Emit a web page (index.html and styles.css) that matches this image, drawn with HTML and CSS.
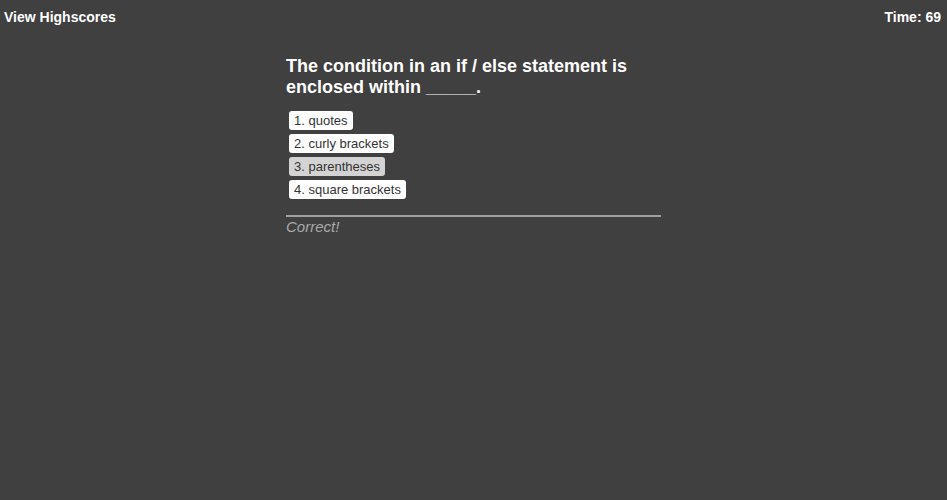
FILE: index.html
```html
<!DOCTYPE html>
<html>
<head>
<meta charset="utf-8">
<link rel="stylesheet" href="styles.css">
</head>
<body>
<header class="topbar">
  <a class="highscores">View Highscores</a>
  <span class="timer">Time: 69</span>
</header>
<main class="quiz">
  <h2 class="question">The condition in an if / else statement is enclosed within _____.</h2>
  <div class="choices">
    <button class="choice">1. quotes</button>
    <button class="choice">2. curly brackets</button>
    <button class="choice selected">3. parentheses</button>
    <button class="choice">4. square brackets</button>
  </div>
  <div class="feedback">Correct!</div>
</main>
</body>
</html>
```
FILE: styles.css
```css
html, body {
  margin: 0;
  padding: 0;
  background: #404040;
  font-family: "Liberation Sans", Arial, sans-serif;
  height: 100%;
}
.topbar {
  display: flex;
  justify-content: space-between;
  padding: 9px 6px 0 4px;
  font-size: 14px;
  font-weight: bold;
  color: #fff;
}
.quiz {
  width: 375px;
  margin: 0 auto;
  padding-top: 31px;
  box-sizing: border-box;
}
.question {
  margin: 0 0 13px 0;
  font-size: 18px;
  line-height: 21px;
  color: #fff;
}
.choices {
  display: flex;
  flex-direction: column;
  align-items: flex-start;
  gap: 4px;
  padding-left: 3px;
}
.choice {
  font-family: "Liberation Sans", Arial, sans-serif;
  font-size: 13px;
  line-height: 15px;
  color: #333;
  background: #fff;
  border: none;
  border-radius: 3px;
  padding: 2px 5px;
}
.choice.selected {
  background: #d3d3d3;
}
.feedback {
  margin-top: 16px;
  border-top: 2px solid #a0a0a0;
  padding-top: 1px;
  font-style: italic;
  font-size: 15px;
  color: #a9a9a9;
}
```
